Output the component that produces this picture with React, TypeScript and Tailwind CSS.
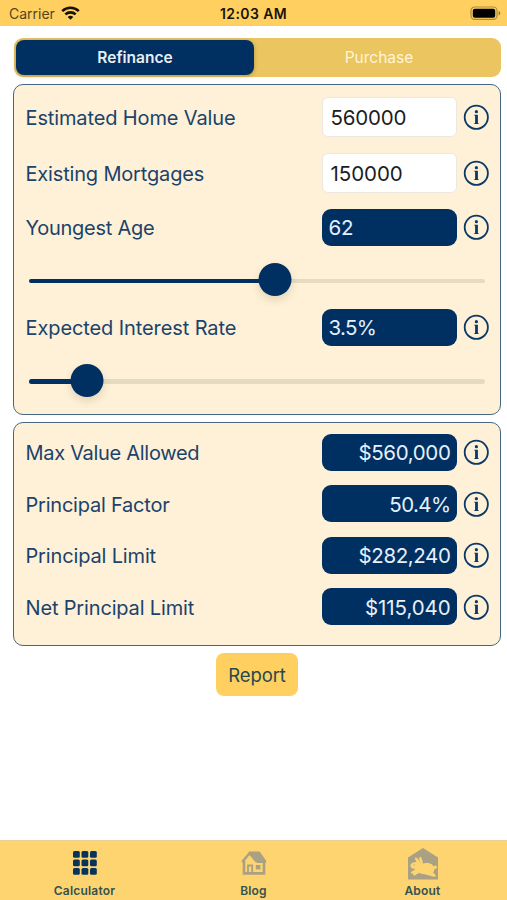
import React from "react";

function InfoIcon() {
  return (
    <svg className="h-[26px] w-[26px] shrink-0" viewBox="0 0 26 26" fill="none">
      <circle cx="13.3" cy="13.3" r="11.6" stroke="#0b3a66" strokeWidth="1.8" />
      <circle cx="13.4" cy="7.7" r="1.6" fill="#0b3a66" />
      <path d="M11.4 10.8H14.9V18.9H15.5V19.9H11.4V18.9H12.1V11.8H11.4Z" fill="#0b3a66" />
    </svg>
  );
}

type RowProps = {
  label: string;
  value: string;
  kind?: "input" | "left" | "right";
  tracking?: string;
  valueTracking?: string;
};

function Row({ label, value, kind = "right", tracking = "", valueTracking = "" }: RowProps) {
  const box =
    kind === "input"
      ? "h-10 rounded-[6px] border border-[#ece8df] bg-white pl-2 text-[#1c1c1c]"
      : kind === "left"
        ? "h-[37px] rounded-[9px] bg-[#003062] pl-[7px] text-[#e6effa]"
        : "h-[37px] justify-end rounded-[9px] bg-[#003062] pr-1.5 text-[#e6effa]";
  return (
    <div className="flex items-center">
      <span className={`flex-1 pt-[2px] whitespace-nowrap text-[20px] leading-7 text-[#1b436b] ${tracking}`}>{label}</span>
      <div className={`flex w-[135px] items-center pt-[3px] text-[20.5px] ${box}`}>
        <span className={valueTracking}>{value}</span>
      </div>
      <div className="ml-[6.5px]">
        <InfoIcon />
      </div>
    </div>
  );
}

function Slider({ percent }: { percent: number }) {
  return (
    <div className="relative ml-[3.5px] mr-[4px] h-[4.5px] rounded-full bg-[#e5dbbf]">
      <div className="h-full rounded-full bg-[#003062]" style={{ width: `${percent}%` }} />
      <div
        className="absolute top-[-15.5px] h-[33px] w-[33px] -translate-x-1/2 rounded-full bg-[#003062] shadow-[0_4px_9px_rgba(90,70,20,0.16)]"
        style={{ left: `${percent}%` }}
      />
    </div>
  );
}

function Wifi() {
  return (
    <svg className="ml-[6px] h-[15px] w-[19px]" viewBox="0 0 19 15" fill="none" stroke="#17130a" strokeWidth="2.6">
      <path d="M1.2 5.1C6 .6 13 .6 17.8 5.1" />
      <path d="M4.3 8.4C7.3 5.7 11.7 5.7 14.7 8.4" />
      <path d="M6.7 10.9C8.3 9.5 10.7 9.5 12.3 10.9L9.5 13.8Z" fill="#17130a" stroke="none" />
    </svg>
  );
}

function Battery() {
  return (
    <svg className="h-[15px] w-[31px]" viewBox="0 0 31 15">
      <rect x="1" y="1" width="26" height="12.4" rx="3.6" fill="none" stroke="#a98b43" strokeWidth="1.2" />
      <rect x="2.8" y="2.7" width="22.4" height="9" rx="2" fill="#000" />
      <path d="M28.6 5V9.4C30.8 8.8 30.8 5.6 28.6 5Z" fill="#8f7537" />
    </svg>
  );
}

function GridIcon() {
  return (
    <svg className="mb-[2px] h-[24px] w-[24px]" viewBox="0 0 24 24" fill="#08345c">
      {[0, 8.5, 17].map((y) =>
        [0, 8.5, 17].map((x) => <rect key={`${x}-${y}`} x={x} y={y} width="6.8" height="6.8" rx="1.5" />),
      )}
    </svg>
  );
}

function HouseIcon() {
  return (
    <svg className="mb-[2px] h-[26px] w-[26px]" viewBox="0 0 26 26" fill="none" stroke="#aaa083">
      <path d="M3 11V23.4H23V12" strokeWidth="2.6" />
      <path d="M1.2 12L8.6 3.2L16 12" strokeWidth="2.4" />
      <path d="M8 1.6H18.6L25 10.6V13H16.2Z" fill="#aaa083" stroke="none" />
      <path d="M7 23V15.5H11.2V23" strokeWidth="1.8" />
      <rect x="14.8" y="15" width="4.6" height="4.4" fill="#aaa083" stroke="none" />
    </svg>
  );
}

function RabbitHouseIcon() {
  return (
    <svg className="h-[32px] w-[32px]" viewBox="0 0 32 32">
      <path d="M16 0L31 9.5V31.5H1V9.5Z" fill="#aaa083" />
      <g fill="#fdd470">
        <ellipse cx="7.8" cy="17.4" rx="4.4" ry="3.2" transform="rotate(-18 7.8 17.4)" />
        <ellipse cx="10.6" cy="12.8" rx="1.5" ry="3.9" transform="rotate(-34 10.6 12.8)" />
        <ellipse cx="14" cy="12.6" rx="1.4" ry="4" transform="rotate(-14 14 12.6)" />
        <path d="M8 15.4C11 14.4 14 16 16.5 15.4C21.5 14 26.4 15.8 27.4 20C28 24.8 24 26.4 20 26.4C15.5 26.6 10 25 8 20.5Z" />
        <circle cx="28.2" cy="19.2" r="1.7" />
        <path d="M9.5 20.5L14.2 23.8L7.6 27.4C6 27.8 5.4 26.4 6.6 25.6L4.8 25.6C3.6 25.4 3.6 24.2 4.8 23.6Z" />
        <path d="M24.8 23.4L28.6 27C29 28.4 27.8 29 26.6 28.8L18.6 26.4L20 24Z" />
      </g>
      <circle cx="7" cy="16.8" r=".6" fill="#aaa083" />
    </svg>
  );
}

function Tab({ label, children }: { label: string; children: React.ReactNode }) {
  return (
    <div className="flex flex-1 flex-col items-center">
      <div className="flex h-[33px] items-center justify-center">{children}</div>
      <span className="mt-[3px] text-[12px] leading-4 font-semibold tracking-[0.2px] text-[#34524f]">{label}</span>
    </div>
  );
}

export default function App() {
  return (
    <div className="flex h-[900px] w-[507px] flex-col overflow-hidden bg-white font-['Inter','Liberation_Sans',sans-serif]">
      <header className="grid h-[25.5px] shrink-0 grid-cols-3 items-center bg-[#ffd05f] pt-[2px] text-[14px] text-[#17130a]">
        <div className="flex items-center pl-[9px]">
          <span className="text-[#55461f]">Carrier</span>
          <Wifi />
        </div>
        <span className="text-center font-semibold tracking-[0.4px]">12:03 AM</span>
        <div className="flex justify-end pr-[6px]">
          <Battery />
        </div>
      </header>

      <main className="flex flex-1 flex-col pl-[13px] pr-[6px] pt-[12.5px]">
        <div className="ml-px flex h-[38.5px] rounded-[9px] bg-[#ebc560] p-[2px] text-[15.5px]">
          <div className="flex w-[238px] items-center justify-center rounded-[8px] bg-[#003062] font-semibold text-[#e8eef5] shadow-[0_1px_4px_rgba(0,0,0,0.25)]">
            Refinance
          </div>
          <div className="flex flex-1 items-center justify-center pl-[5px] text-[#fff4d8]">Purchase</div>
        </div>

        <section className="mt-[7px] h-[331px] rounded-[10px] border-[1.5px] border-[#456783] bg-[#fef1d7] pl-[11.5px] pr-[11px] pt-[12px]">
          <div className="flex flex-col gap-4">
            <Row label="Estimated Home Value" value="560000" kind="input" tracking="tracking-[-0.13px]" valueTracking="tracking-[-0.2px]" />
            <Row label="Existing Mortgages" value="150000" kind="input" tracking="tracking-[-0.17px]" valueTracking="tracking-[-0.05px]" />
            <Row label="Youngest Age" value="62" kind="left" tracking="tracking-[-0.27px]" valueTracking="tracking-[-0.3px]" />
          </div>
          <div className="flex h-[63px] items-center pt-[8px]">
            <div className="flex-1">
              <Slider percent={54} />
            </div>
          </div>
          <Row label="Expected Interest Rate" value="3.5%" kind="left" tracking="tracking-[-0.1px]" valueTracking="tracking-[-0.7px]" />
          <div className="pt-[33.5px]">
            <Slider percent={12.7} />
          </div>
        </section>

        <section className="mt-[7px] flex h-[224px] flex-col gap-[14.6px] rounded-[10px] border-[1.5px] border-[#456783] bg-[#fef1d7] pl-[11.5px] pr-[11px] pt-[11px]">
          <Row label="Max Value Allowed" value="$560,000" tracking="tracking-[-0.3px]" valueTracking="tracking-[-0.35px]" />
          <Row label="Principal Factor" value="50.4%" tracking="tracking-[-0.22px]" valueTracking="tracking-[-0.6px]" />
          <Row label="Principal Limit" value="$282,240" tracking="tracking-[-0.15px]" valueTracking="tracking-[-0.4px]" />
          <Row label="Net Principal Limit" value="$115,040" tracking="tracking-[-0.16px]" valueTracking="tracking-[-0.1px]" />
        </section>

        <button className="mt-[7.5px] h-[43px] w-[82px] self-center rounded-[8px] bg-[#ffd05f] pt-[2px] text-[18.5px] tracking-[-0.1px] text-[#24484f]">
          Report
        </button>
      </main>

      <nav className="flex h-[60.5px] shrink-0 border-t border-[#e9cf93] bg-[#fdd470] pt-[6.5px]">
        <Tab label="Calculator">
          <GridIcon />
        </Tab>
        <Tab label="Blog">
          <HouseIcon />
        </Tab>
        <Tab label="About">
          <RabbitHouseIcon />
        </Tab>
      </nav>
    </div>
  );
}
